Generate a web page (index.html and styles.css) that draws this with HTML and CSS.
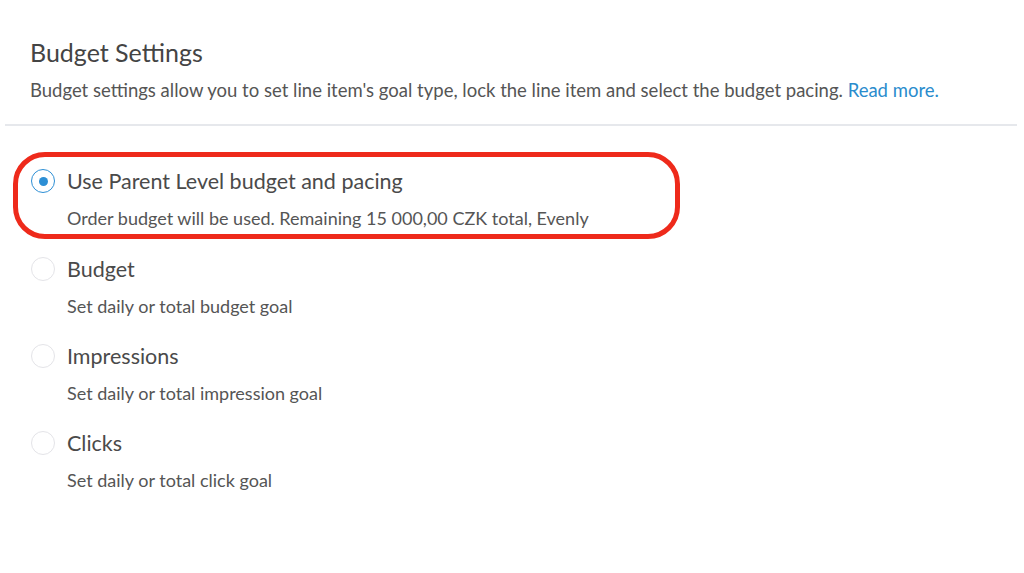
FILE: index.html
```html
<!DOCTYPE html>
<html lang="en">

<head>
    <meta charset="utf-8" />
    <title>Budget Settings</title>
    <link rel="stylesheet" href="styles.css">
</head>

<body>
    <header class="intro">
        <h2>Budget Settings</h2>
        <p>Budget settings allow you to set line item's goal type, lock the line item and select the budget pacing. <a href="#">Read more.</a></p>
    </header>
    <hr class="divider">

    <div class="options">
        <!-- the selected option is circled in red -->
        <div class="option highlight">
            <span class="radio checked"></span>
            <span class="label">Use Parent Level budget and pacing</span>
            <span class="sub">Order budget will be used. Remaining 15 000,00 CZK total, Evenly</span>
        </div>
        <div class="option">
            <span class="radio"></span>
            <span class="label">Budget</span>
            <span class="sub">Set daily or total budget goal</span>
        </div>
        <div class="option">
            <span class="radio"></span>
            <span class="label">Impressions</span>
            <span class="sub">Set daily or total impression goal</span>
        </div>
        <div class="option">
            <span class="radio"></span>
            <span class="label">Clicks</span>
            <span class="sub">Set daily or total click goal</span>
        </div>
    </div>
</body>

</html>
```

FILE: styles.css
```css
* {
    font-family: Lato, "Open Sans", sans-serif;
}

body {
    margin: 0;
    background: #fff;
    color: #555;
}

.intro {
    padding: 36px 30px 0 30px;
}

.intro h2 {
    margin: 0;
    font-size: 25px;
    font-weight: normal;
    line-height: 32px;
    color: #444;
}

.intro p {
    margin: 10px 0 0 0;
    font-size: 18.5px;
    line-height: 24px;
}

.intro a {
    color: #2a8ccd;
    text-decoration: none;
}

.divider {
    margin: 22px 7px 0 5px;
    border: 0;
    border-top: 2px solid #e6e8ec;
}

.options {
    padding: 26px 0 0 31px;
}

.option {
    display: grid;
    grid-template-columns: 24px auto;
    column-gap: 12px;
    row-gap: 13px;
    align-items: center;
    margin-bottom: 26px;
}

.option.highlight {
    width: 667px;
    box-sizing: border-box;
    margin: 0 0 17px -18px;
    padding: 11px 0 5px 13px;
    border: 5px solid #ee2a1b;
    border-radius: 32px;
}

.radio {
    width: 24px;
    height: 24px;
    box-sizing: border-box;
    border: 1.5px solid #e4e4e8;
    border-radius: 50%;
    display: flex;
    align-items: center;
    justify-content: center;
}

.radio.checked {
    border-color: #2d8fd5;
}

.radio.checked::after {
    content: "";
    width: 9px;
    height: 9px;
    border-radius: 50%;
    background: #2d8fd5;
}

.label {
    font-size: 21.5px;
    line-height: 26px;
    color: #4a4a4a;
}

.sub {
    grid-column: 2;
    font-size: 18px;
    line-height: 22px;
    color: #555;
}
```
